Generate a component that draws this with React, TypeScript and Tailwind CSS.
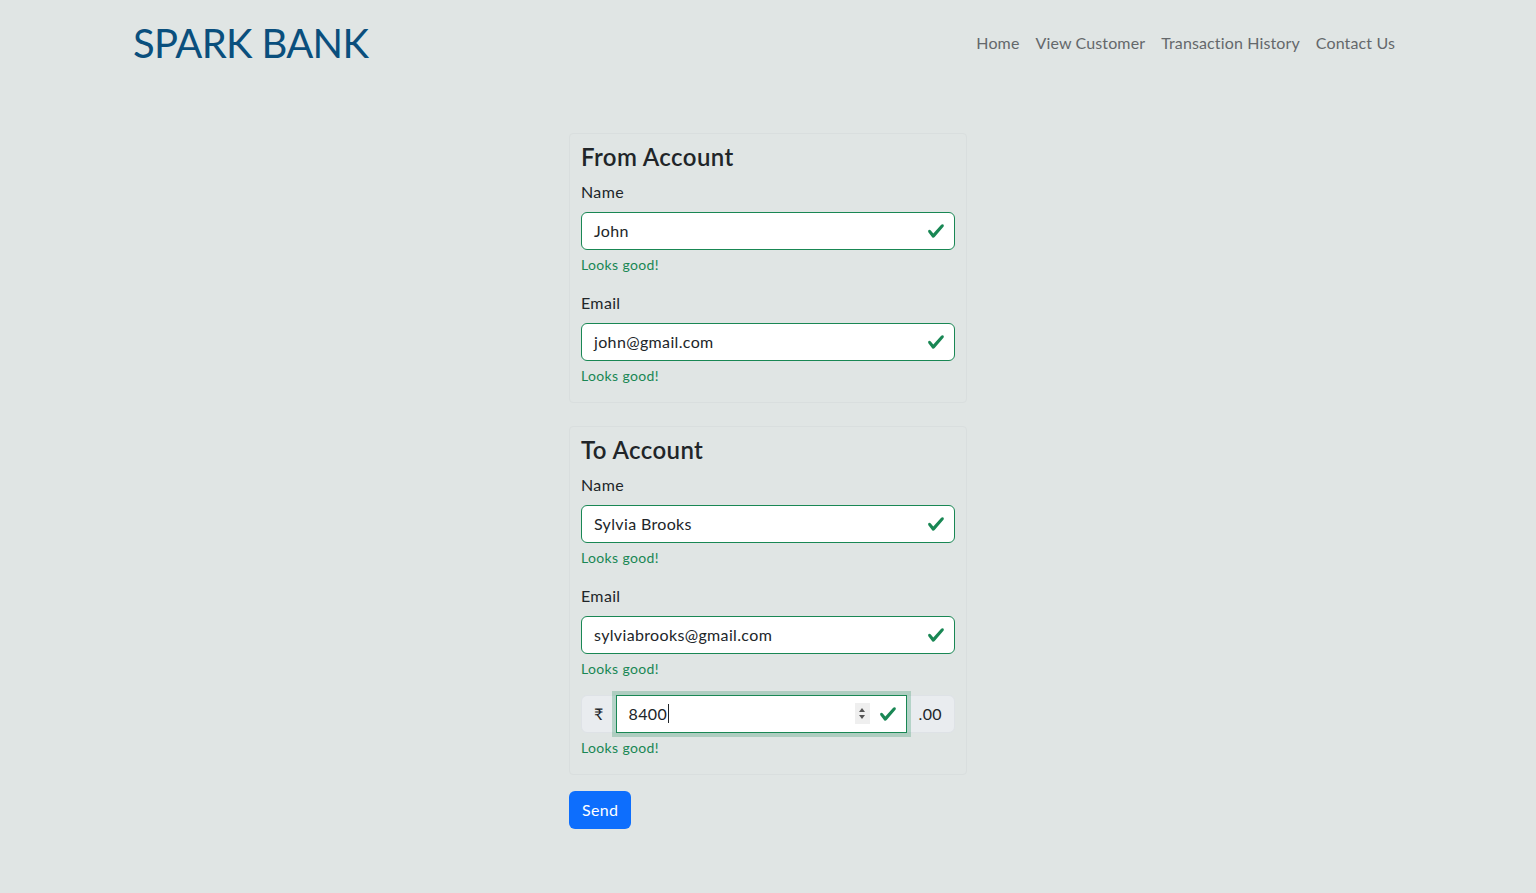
import React from "react";

const font = { fontFamily: "Lato, 'Open Sans', sans-serif" };

function Check() {
    return (
        <svg width="18" height="18" viewBox="0 0 8 8" className="shrink-0">
            <path fill="#198754" d="M2.3 6.73.6 4.53c-.4-1.04.46-1.4 1.1-.8l1.1 1.4 3.4-3.8c.6-.63 1.6-.27 1.2.7l-4 4.6c-.43.5-.8.4-1.1.1z" />
        </svg>
    );
}

function Field({ label, value }: { label: string; value: string }) {
    return (
        <div className="mb-4">
            <div className="mb-2 text-[16px] leading-6 text-[#212529]">{label}</div>
            <div className="flex h-[38px] items-center justify-between rounded-md border border-[#198754] bg-white pl-3 pr-[9px]">
                <span className="text-[16px] text-[#212529]">{value}</span>
                <Check />
            </div>
            <div className="mt-1 text-[14px] leading-[21px] text-[#198754]">Looks good!</div>
        </div>
    );
}

function Box({ title, children }: { title: string; children: React.ReactNode }) {
    return (
        <div className="rounded-sm border border-[#d9dede] px-[11px] pt-[9px]">
            <h4 className="mb-2 text-[24px] font-semibold leading-[1.2] tracking-[0.4px] text-[#212529]">{title}</h4>
            {children}
        </div>
    );
}

export default function App() {
    return (
        <div className="min-h-[893px] bg-[#e0e5e4] tracking-[0.35px]" style={font}>
            <div className="mx-auto flex h-[86px] w-[1270px] items-center justify-between">
                <div className="text-[40px] leading-none tracking-[-0.7px] text-[#0a4f7d]">SPARK BANK</div>
                <nav className="flex text-[16px] tracking-[0.13px] text-[#64686b]">
                    <a className="px-2">Home</a>
                    <a className="px-2">View Customer</a>
                    <a className="px-2">Transaction History</a>
                    <a className="px-2">Contact Us</a>
                </nav>
            </div>

            <div className="mx-auto mt-[47px] w-[398px]">
                <Box title="From Account">
                    <Field label="Name" value="John" />
                    <Field label="Email" value="john@gmail.com" />
                </Box>

                <div className="h-[23px]" />

                <Box title="To Account">
                    <Field label="Name" value="Sylvia Brooks" />
                    <Field label="Email" value="sylviabrooks@gmail.com" />
                    <div className="mb-4">
                        <div className="flex h-[38px]">
                            <span className="flex items-center rounded-l-md border border-[#dee2e6] bg-[#e9ecef] px-3 text-[16px] text-[#212529]">₹</span>
                            <div className="relative -ml-px flex flex-1 items-center border border-[#198754] bg-white pl-3 pr-[9px] shadow-[0_0_0_4px_rgba(25,135,84,0.25)]">
                                <span className="text-[16px] text-[#212529]">8400</span>
                                <span className="ml-px h-[19px] w-px bg-[#212529]" />
                                <span className="ml-auto mr-[9px] flex h-[21px] w-[15px] flex-col items-center justify-center gap-[3px] bg-[#efefef]">
                                    <span className="h-0 w-0 border-x-[3.5px] border-b-[4px] border-x-transparent border-b-[#555]" />
                                    <span className="h-0 w-0 border-x-[3.5px] border-t-[4px] border-x-transparent border-t-[#555]" />
                                </span>
                                <Check />
                            </div>
                            <span className="-ml-px flex items-center rounded-r-md border border-[#dee2e6] bg-[#e9ecef] px-3 text-[16px] text-[#212529]">.00</span>
                        </div>
                        <div className="mt-1 text-[14px] leading-[21px] text-[#198754]">Looks good!</div>
                    </div>
                </Box>

                <button className="mt-4 h-[38px] rounded-md bg-[#0d6efd] px-[13px] text-[16px] text-white">Send</button>
            </div>
        </div>
    );
}
